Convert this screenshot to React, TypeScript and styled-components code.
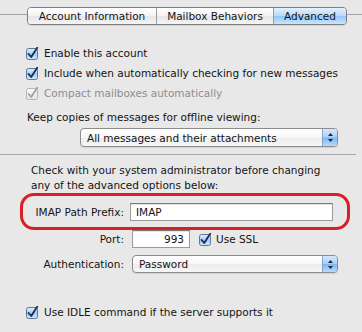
import React from "react";
import styled, { createGlobalStyle } from "styled-components";

const GlobalStyle = createGlobalStyle`
  * { box-sizing: border-box; }
  body {
    margin: 0;
    background: #e8e8e8;
    font-family: "DejaVu Sans", "Lucida Grande", sans-serif;
    font-size: 10.5px;
    color: #141414;
  }
`;

const Pane = styled.div`
  width: 362px;
  height: 332px;
  overflow: hidden;
  background: #e8e8e8;
`;

const TabBar = styled.div`
  display: flex;
  height: 18px;
  margin-top: 7px;
`;

const TabLine = styled.div<{ $w?: number }>`
  height: 1px;
  margin-top: 7px;
  background: #a2a2a2;
  ${(p) => (p.$w ? `width: ${p.$w}px;` : "flex: 1;")}
`;

const Tabs = styled.div`
  display: flex;
  width: 320px;
  height: 18px;
  border: 1px solid #7e7e7e;
  border-radius: 4px;
  overflow: hidden;
  box-shadow: 0 1px 1px rgba(0, 0, 0, 0.1);
`;

const Tab = styled.div<{ $w: number; $active?: boolean }>`
  width: ${(p) => p.$w}px;
  display: flex;
  align-items: center;
  justify-content: center;
  & + & {
    border-left: 1px solid #9c9c9c;
  }
  background: ${(p) =>
    p.$active
      ? "linear-gradient(#e4f1fd 0%, #b9dafa 48%, #94c7f6 52%, #c9e6fd 100%)"
      : "linear-gradient(#ffffff 0%, #f3f3f3 48%, #e6e6e6 52%, #f4f4f4 100%)"};
`;

const Section = styled.div<{ $top: number; $left?: number }>`
  margin-top: ${(p) => p.$top}px;
  padding-left: ${(p) => p.$left ?? 0}px;
`;

const CheckRow = styled.div<{ $disabled?: boolean }>`
  display: flex;
  align-items: center;
  gap: 5px;
  height: 20px;
  padding-left: 26px;
  color: ${(p) => (p.$disabled ? "#8e8e8e" : "inherit")};
`;

const Label = styled.div`
  line-height: 14px;
`;

const Notice = styled.div`
  line-height: 15px;
`;

const PopupWrap = styled.div<{ $left: number; $w: number; $h: number }>`
  display: flex;
  margin-left: ${(p) => p.$left}px;
  width: ${(p) => p.$w}px;
  height: ${(p) => p.$h}px;
  border: 1px solid #8c8c8c;
  border-radius: 4px;
  overflow: hidden;
  background: linear-gradient(#ffffff 0%, #f7f7f7 50%, #ececec 51%, #f6f6f6 100%);
  box-shadow: 0 1px 1px rgba(0, 0, 0, 0.1);
`;

const PopupText = styled.div`
  flex: 1;
  display: flex;
  align-items: center;
  padding-left: 6px;
`;

const PopupArrow = styled.div`
  width: 15px;
  display: flex;
  align-items: center;
  justify-content: center;
  border-left: 1px solid #8aa3c4;
  background: linear-gradient(#d5e8fc 0%, #a9d0f8 48%, #7fb6ef 52%, #b6dcfb 100%);
`;

const Separator = styled.div`
  width: 356px;
  height: 1px;
  margin-top: 7px;
  background: #a8a8a8;
`;

const Highlight = styled.div`
  display: flex;
  align-items: center;
  width: 330px;
  height: 37px;
  margin-left: 20px;
  border: 3px solid #d91f26;
  border-radius: 14px;
`;

const FieldRow = styled.div<{ $top: number }>`
  display: flex;
  align-items: center;
  margin-top: ${(p) => p.$top}px;
  padding-left: 23px;
`;

const FieldLabel = styled.div<{ $gap: number }>`
  width: 101px;
  text-align: right;
  margin-right: ${(p) => p.$gap}px;
`;

const TextField = styled.div<{ $w: number; $h: number; $right?: boolean }>`
  width: ${(p) => p.$w}px;
  height: ${(p) => p.$h}px;
  display: flex;
  align-items: center;
  justify-content: ${(p) => (p.$right ? "flex-end" : "flex-start")};
  padding: 0 5px;
  background: #fff;
  border: 1px solid #9b9b9b;
  border-top-color: #7b7b7b;
  box-shadow: inset 0 1px 1px rgba(0, 0, 0, 0.12);
`;

const InlineCheck = styled.div`
  display: flex;
  align-items: center;
  gap: 4px;
  margin-left: 9px;
`;

const CheckBox = ({ disabled }: { disabled?: boolean }) => (
  <svg width="13" height="13" viewBox="0 0 13 13">
    <defs>
      <linearGradient id="cbOn" x1="0" y1="0" x2="0" y2="1">
        <stop offset="0" stopColor="#e2efff" />
        <stop offset="0.5" stopColor="#a7ccf5" />
        <stop offset="1" stopColor="#cfe6ff" />
      </linearGradient>
      <linearGradient id="cbOff" x1="0" y1="0" x2="0" y2="1">
        <stop offset="0" stopColor="#fbfbfb" />
        <stop offset="1" stopColor="#e6e6e6" />
      </linearGradient>
    </defs>
    <rect
      x="0.5"
      y="1.5"
      width="11"
      height="11"
      rx="2"
      fill={disabled ? "url(#cbOff)" : "url(#cbOn)"}
      stroke={disabled ? "#b4b4b4" : "#5f7797"}
    />
    <path
      d="M2.6 7 L5.2 10 L11.2 0.8"
      fill="none"
      stroke={disabled ? "#a3a3a3" : "#1c2f55"}
      strokeWidth="1.9"
      strokeLinecap="round"
      strokeLinejoin="round"
    />
  </svg>
);

const Popup = ({ left, w, h, text }: { left: number; w: number; h: number; text: string }) => (
  <PopupWrap $left={left} $w={w} $h={h}>
    <PopupText>{text}</PopupText>
    <PopupArrow>
      <svg width="7" height="11" viewBox="0 0 7 11">
        <path d="M3.5 1 L6 4 L1 4 Z" fill="#1d2a40" />
        <path d="M3.5 10 L6 7 L1 7 Z" fill="#1d2a40" />
      </svg>
    </PopupArrow>
  </PopupWrap>
);

export default function App() {
  return (
    <Pane>
      <GlobalStyle />
      <TabBar>
        <TabLine $w={27} />
        <Tabs>
          <Tab $w={128}>Account Information</Tab>
          <Tab $w={117}>Mailbox Behaviors</Tab>
          <Tab $w={73} $active>
            Advanced
          </Tab>
        </Tabs>
        <TabLine />
      </TabBar>

      <Section $top={18}>
        <CheckRow>
          <CheckBox />
          <span>Enable this account</span>
        </CheckRow>
        <CheckRow>
          <CheckBox />
          <span>Include when automatically checking for new messages</span>
        </CheckRow>
        <CheckRow $disabled>
          <CheckBox disabled />
          <span>Compact mailboxes automatically</span>
        </CheckRow>
      </Section>

      <Section $top={7} $left={27}>
        <Label>Keep copies of messages for offline viewing:</Label>
      </Section>
      <Section $top={4}>
        <Popup left={80} w={258} h={19} text="All messages and their attachments" />
      </Section>

      <Separator />

      <Section $top={8} $left={31}>
        <Notice>
          Check with your system administrator before changing
          <br />
          any of the advanced options below:
        </Notice>
      </Section>

      <Highlight>
        <FieldLabel $gap={6}>IMAP Path Prefix:</FieldLabel>
        <TextField $w={203} $h={18}>
          IMAP
        </TextField>
      </Highlight>

      <FieldRow $top={0}>
        <FieldLabel $gap={8}>Port:</FieldLabel>
        <TextField $w={58} $h={18} $right>
          993
        </TextField>
        <InlineCheck>
          <CheckBox />
          <span>Use SSL</span>
        </InlineCheck>
      </FieldRow>

      <FieldRow $top={7}>
        <FieldLabel $gap={8}>Authentication:</FieldLabel>
        <Popup left={0} w={206} h={18} text="Password" />
      </FieldRow>

      <Section $top={29}>
        <CheckRow>
          <CheckBox />
          <span>Use IDLE command if the server supports it</span>
        </CheckRow>
      </Section>
    </Pane>
  );
}
